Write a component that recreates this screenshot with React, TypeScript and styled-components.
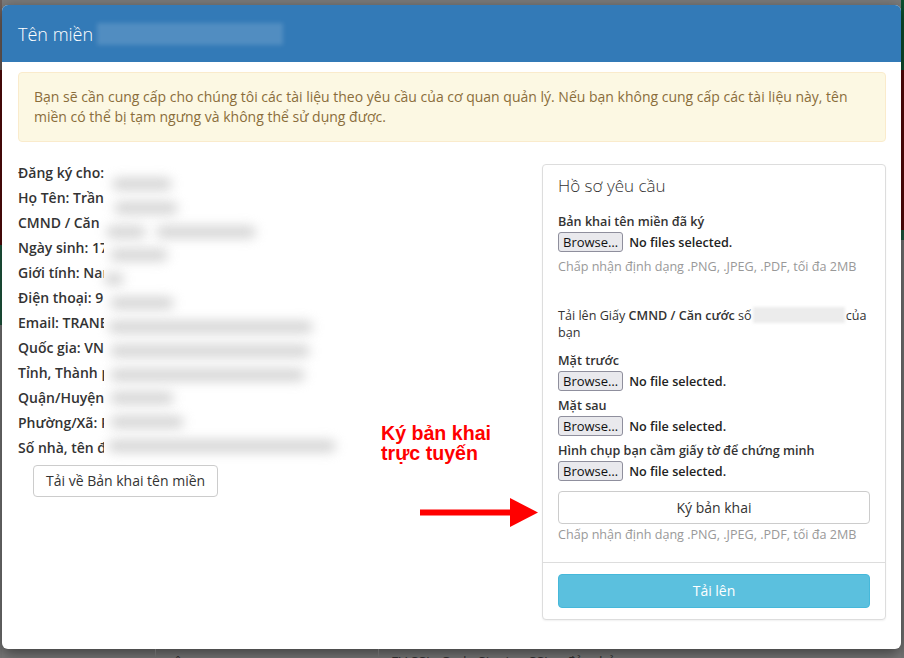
import styled, { createGlobalStyle } from "styled-components";

const GlobalStyle = createGlobalStyle`
  html, body {
    margin: 0;
    padding: 0;
  }
  body {
    width: 904px;
    height: 658px;
    overflow: hidden;
    font-family: "Open Sans", "Noto Sans", sans-serif;
    color: #333;
  }
  * {
    box-sizing: border-box;
  }
`;

const Page = styled.div`
  width: 904px;
  height: 658px;
  padding: 5px 3px 0 2px;
  display: flex;
  flex-direction: column;
  overflow: hidden;
  background:
    linear-gradient(to bottom, #6e5f5a 0 70px, #560b0b 70px 245px, #1f5a40 245px 325px, #777 325px) left top / 2px 100% no-repeat,
    linear-gradient(to bottom, #0d4f2e 0 70px, #560b0b 70px 230px, #1f5a40 230px 240px, #777 240px) right top / 3px 100% no-repeat,
    #7b7b7b;
`;

const Modal = styled.div`
  flex-shrink: 0;
  height: 644px;
  background: #fff;
  border-radius: 6px;
  box-shadow: 0 5px 15px rgba(0, 0, 0, 0.5);
  display: flex;
  flex-direction: column;
  overflow: hidden;
`;

const Header = styled.div`
  height: 57px;
  background: #337ab7;
  display: flex;
  align-items: center;
  padding: 0 16px;
  gap: 4px;
`;

const Title = styled.h4`
  margin: 0;
  color: #fff;
  font-size: 18px;
  font-weight: 300;
  line-height: 20px;
`;

const HeaderBlur = styled.span`
  width: 186px;
  height: 22px;
  background: rgba(255, 255, 255, 0.15);
  filter: blur(2px);
`;

const Body = styled.div`
  padding: 10px 15px 0 16px;
`;

const Alert = styled.div`
  padding: 14px 15px;
  border: 1px solid #faebcc;
  border-radius: 4px;
  background: #fcf8e3;
  color: #8a6d3b;
  font-size: 14px;
  line-height: 20px;
  margin-bottom: 18px;
`;

const Row = styled.div`
  position: relative;
  display: grid;
  grid-template-columns: 1fr 344px;
  column-gap: 30px;
`;

const LeftCol = styled.div`
  position: relative;
`;

const InfoLine = styled.div`
  font-size: 14px;
  font-weight: 600;
  line-height: 25px;
  color: #333;
  white-space: nowrap;
`;

const Redaction = styled.div`
  position: absolute;
  left: 86px;
  top: 6px;
  width: 236px;
  height: 292px;
  background: #fff;
  padding-top: 6px;
  display: flex;
  flex-direction: column;
`;

const RedactRow = styled.div`
  height: 25px;
  display: flex;
  align-items: center;
  gap: 10px;
`;

const BlurBar = styled.span<{ $w: number; $o?: number }>`
  display: block;
  width: ${(p) => p.$w}px;
  margin-left: ${(p) => p.$o ?? 0}px;
  height: 12px;
  border-radius: 6px;
  background: #c8c8c8;
  filter: blur(6px);
  opacity: 0.8;
`;

const Button = styled.button`
  font-family: "Open Sans", "Noto Sans", sans-serif;
  font-size: 14px;
  line-height: 20px;
  color: #333;
  background: #fff;
  border: 1px solid #ccc;
  border-radius: 4px;
  padding: 5px 12px;
  cursor: pointer;
`;

const DownloadButton = styled(Button)`
  margin: 5px 0 0 15px;
`;

const Annotation = styled.div`
  position: absolute;
  left: 363px;
  top: 263px;
  color: #f00;
  font-family: "Liberation Sans", Arial, sans-serif;
  font-weight: 700;
  font-size: 19.6px;
  line-height: 20px;
`;

const Arrow = styled.svg`
  position: absolute;
  left: 402px;
  top: 338px;
`;

const Panel = styled.div`
  margin-top: 4px;
  border: 1px solid #ddd;
  border-radius: 4px;
  box-shadow: 0 1px 2px rgba(0, 0, 0, 0.06);
  background: #fff;
`;

const PanelBody = styled.div`
  padding: 11px 15px 18px;
`;

const PanelTitle = styled.div`
  font-size: 17px;
  font-weight: 300;
  line-height: 20px;
  color: #333;
  margin-bottom: 17px;
`;

const Label = styled.div<{ $gap?: number }>`
  font-size: 12.6px;
  font-weight: 600;
  line-height: 18px;
  color: #333;
  margin-top: ${(p) => p.$gap ?? 0}px;
`;

const FileRow = styled.div`
  display: flex;
  align-items: center;
  gap: 6px;
  margin-top: 1px;
  height: 20px;
`;

const Browse = styled.span`
  height: 20px;
  padding: 0 4px;
  display: flex;
  align-items: center;
  background: #e9e9ed;
  border: 1px solid #8f8f9d;
  border-radius: 3px;
  font-size: 13px;
  color: #111;
`;

const FileStatus = styled.span`
  font-size: 12.6px;
  font-weight: 600;
  color: #222;
`;

const Help = styled.div<{ $gap: number }>`
  font-size: 12.6px;
  line-height: 18px;
  color: #999;
  margin-top: ${(p) => p.$gap}px;
`;

const Notice = styled.p`
  margin: 31px 0 0;
  font-size: 12.6px;
  line-height: 17px;
  color: #333;
  b {
    font-weight: 600;
  }
`;

const InlineBlur = styled.span`
  display: inline-block;
  vertical-align: middle;
  width: 92px;
  height: 16px;
  margin: -3px 1px 0;
  background: #ececec;
  filter: blur(1.5px);
`;

const SignButton = styled(Button)`
  width: 100%;
  height: 33px;
  margin-top: 10px;
  padding: 0 12px;
`;

const PanelFooter = styled.div`
  border-top: 1px solid #ddd;
  padding: 11px 15px 11px;
`;

const UploadButton = styled(Button)`
  width: 100%;
  height: 34px;
  background: #5bc0de;
  border-color: #46b8da;
  color: #fff;
`;

const BottomStrip = styled.div`
  flex: 1;
  display: flex;
  overflow: hidden;
  font-size: 14px;
  color: #2a2a2a;
  line-height: 20px;
`;

const StripCell = styled.div<{ $w: number; $edge?: boolean }>`
  width: ${(p) => p.$w}px;
  padding: 3px 0 0 12px;
  border-left: ${(p) => (p.$edge ? "none" : "1px solid #666")};
  white-space: nowrap;
`;

const infoLines = [
  "Đăng ký cho:",
  "Họ Tên: Trần",
  "CMND / Căn",
  "Ngày sinh: 17",
  "Giới tính: Nam",
  "Điện thoại: 9",
  "Email: TRANE",
  "Quốc gia: VN",
  "Tỉnh, Thành phố",
  "Quận/Huyện",
  "Phường/Xã: P",
  "Số nhà, tên đường",
];

// widths of the blurred (hidden) values, one per info line
const redactBars: [number, number, number?][] = [
  [60, 8],
  [64, 10],
  [40, 2, 100],
  [58, 6],
  [20, 0],
  [64, 6],
  [205, 4],
  [200, 6],
  [195, 6],
  [64, 6],
  [74, 6],
  [228, 4],
];

export default function App() {
  return (
    <>
      <GlobalStyle />
      <Page>
        <Modal>
          <Header>
            <Title>Tên miền</Title>
            <HeaderBlur />
          </Header>
          <Body>
            <Alert>
              Bạn sẽ cần cung cấp cho chúng tôi các tài liệu theo yêu cầu của cơ quan quản lý. Nếu bạn
              không cung cấp các tài liệu này, tên miền có thể bị tạm ngưng và không thể sử dụng được.
            </Alert>
            <Row>
              <LeftCol>
                {infoLines.map((line) => (
                  <InfoLine key={line}>{line}</InfoLine>
                ))}
                <Redaction>
                  {redactBars.map(([w, o, extra], i) => (
                    <RedactRow key={i}>
                      <BlurBar $w={w} $o={o} />
                      {extra ? <BlurBar $w={extra} /> : null}
                    </RedactRow>
                  ))}
                </Redaction>
                <DownloadButton>Tải về Bản khai tên miền</DownloadButton>
              </LeftCol>

              <Panel>
                <PanelBody>
                  <PanelTitle>Hồ sơ yêu cầu</PanelTitle>
                  <Label>Bản khai tên miền đã ký</Label>
                  <FileRow>
                    <Browse>Browse…</Browse>
                    <FileStatus>No files selected.</FileStatus>
                  </FileRow>
                  <Help $gap={6}>Chấp nhận định dạng .PNG, .JPEG, .PDF, tối đa 2MB</Help>

                  <Notice>
                    <span>Tải lên Giấy </span>
                    <b>CMND / Căn cước</b>
                    <span> số</span>
                    <InlineBlur />
                    <span>của</span>
                    <br />
                    <span>bạn</span>
                  </Notice>

                  <Label $gap={11}>Mặt trước</Label>
                  <FileRow>
                    <Browse>Browse…</Browse>
                    <FileStatus>No file selected.</FileStatus>
                  </FileRow>
                  <Label $gap={6}>Mặt sau</Label>
                  <FileRow>
                    <Browse>Browse…</Browse>
                    <FileStatus>No file selected.</FileStatus>
                  </FileRow>
                  <Label $gap={6}>Hình chụp bạn cầm giấy tờ để chứng minh</Label>
                  <FileRow>
                    <Browse>Browse…</Browse>
                    <FileStatus>No file selected.</FileStatus>
                  </FileRow>

                  <SignButton>Ký bản khai</SignButton>
                  <Help $gap={2}>Chấp nhận định dạng .PNG, .JPEG, .PDF, tối đa 2MB</Help>
                </PanelBody>
                <PanelFooter>
                  <UploadButton>Tải lên</UploadButton>
                </PanelFooter>
              </Panel>

              <Annotation>
                Ký bản khai
                <br />
                trực tuyến
              </Annotation>
              <Arrow width="120" height="30" viewBox="0 0 120 30">
                <rect x="0" y="11.5" width="94" height="6" fill="#f00" />
                <polygon points="90,0 118,14.5 90,29" fill="#f00" />
              </Arrow>
            </Row>
          </Body>
        </Modal>
        <BottomStrip>
          <StripCell $w={153} $edge />
          <StripCell $w={223}>rộng</StripCell>
          <StripCell $w={523}>EV SSL, Code Signing SSL... đảm bảo</StripCell>
        </BottomStrip>
      </Page>
    </>
  );
}
